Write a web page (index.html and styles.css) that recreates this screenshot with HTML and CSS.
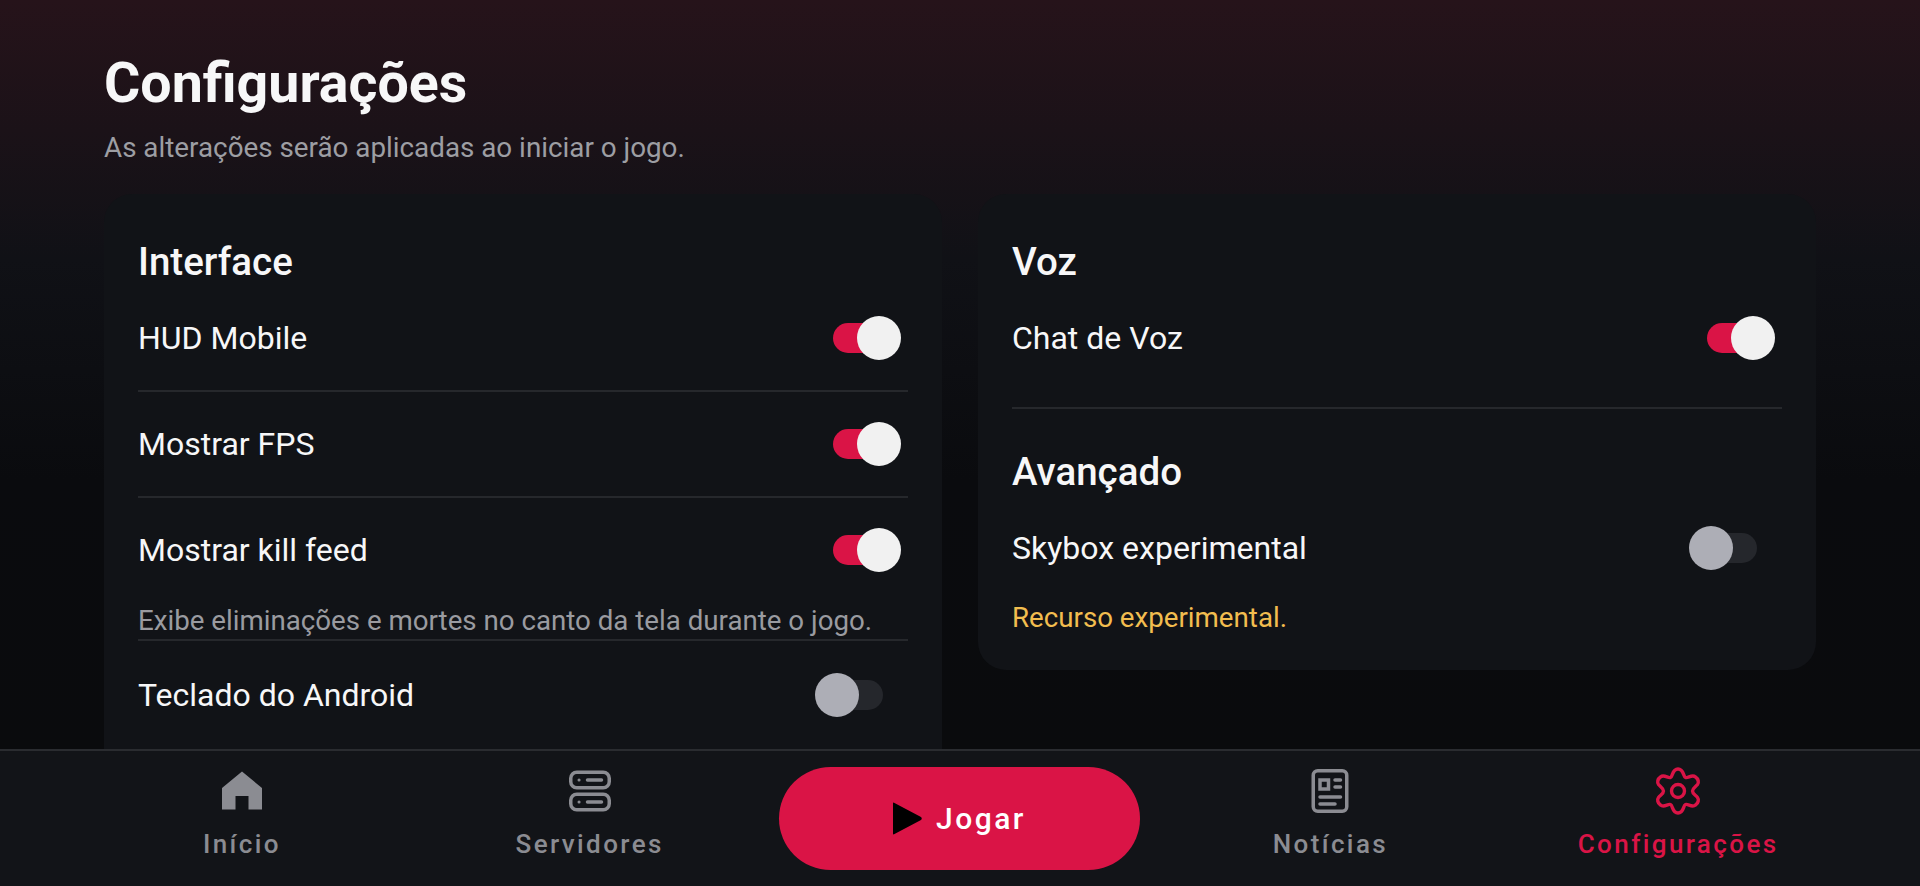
FILE: index.html
```html
<!DOCTYPE html>
<html lang="pt-BR">
<head>
    <title>Configurações</title>
    <meta charset="UTF-8">
    <link rel="stylesheet" href="styles.css">
</head>
<body>
    <main class="content">
        <header class="page-head">
            <h1>Configurações</h1>
            <p>As alterações serão aplicadas ao iniciar o jogo.</p>
        </header>

        <div class="columns">
            <section class="card">
                <h2>Interface</h2>
                <div class="setting">
                    <div class="setting-main"><span>HUD Mobile</span><span class="toggle on"></span></div>
                </div>
                <div class="setting">
                    <div class="setting-main"><span>Mostrar FPS</span><span class="toggle on"></span></div>
                </div>
                <div class="setting">
                    <div class="setting-main"><span>Mostrar kill feed</span><span class="toggle on"></span></div>
                    <p class="hint">Exibe eliminações e mortes no canto da tela durante o jogo.</p>
                </div>
                <div class="setting setting-last setting-end">
                    <div class="setting-main"><span>Teclado do Android</span><span class="toggle"></span></div>
                </div>
            </section>

            <section class="card card-short">
                <h2>Voz</h2>
                <div class="setting setting-spaced">
                    <div class="setting-main"><span>Chat de Voz</span><span class="toggle on"></span></div>
                </div>
                <h2 class="section-next">Avançado</h2>
                <div class="setting setting-last">
                    <div class="setting-main"><span>Skybox experimental</span><span class="toggle"></span></div>
                    <p class="hint warn">Recurso experimental.</p>
                </div>
            </section>
        </div>
    </main>

    <nav class="tabbar">
        <a class="tab">
            <svg class="icon" viewBox="-4 -4.5 48 48"><path fill="currentColor" d="M20 0 L40 16.500 V38 H26.500 V24.500 H13.500 V38 H0 V16.500 Z"/></svg>
            <span>Início</span>
        </a>
        <a class="tab">
            <svg class="icon" viewBox="-3 -3.500 48 48" fill="none" stroke="currentColor">
                <rect x="1.750" y="1.750" width="38.500" height="15.500" rx="6" stroke-width="3.500"/>
                <rect x="1.750" y="23.750" width="38.500" height="15.500" rx="6" stroke-width="3.500"/>
                <path stroke-width="3.500" stroke-linecap="round" d="M18.500 9.500h14M18.500 31.500h14"/>
                <path stroke-width="3" stroke-linecap="round" d="M10 9.500h.1M10 31.500h.1"/>
            </svg>
            <span>Servidores</span>
        </a>
        <button class="play">
            <svg class="play-icon" viewBox="0 0 30 33"><path fill="#000" d="M1 1.500 Q1 0 2.500 1 L29 15 Q30.500 16.500 29 18 L2.500 32 Q1 33 1 31.500 Z"/></svg>
            <span>Jogar</span>
        </button>
        <a class="tab">
            <svg class="icon" viewBox="-5.500 -2 48 48" fill="none" stroke="currentColor">
                <rect x="1.750" y="1.750" width="33.500" height="40.500" rx="4.500" stroke-width="3.500"/>
                <rect x="8.500" y="11" width="8.500" height="9" stroke-width="3.500"/>
                <path stroke-width="3.500" stroke-linecap="round" d="M23.500 11h5.500M23.500 18h5.500M8.500 28h20.500M8.500 35h15"/>
            </svg>
            <span>Notícias</span>
        </a>
        <a class="tab active">
            <svg class="icon" viewBox="-2 0 48 48" fill="none" stroke="currentColor" stroke-width="3.400">
                <path d="M14.500 10.500 C17 9.500 16 2 22 2 C28 2 27 9.500 29.500 10.500 C32 11.500 36 7 39.500 10 C42.500 12 43 15.500 41.500 17.500 C39.500 20 36.500 21 36.500 24 C36.500 27 39.500 28 41.500 30.500 C43 32.500 42.500 36 39.500 38 C36 41 32 36.500 29.500 37.500 C27 38.500 28 46 22 46 C16 46 17 38.500 14.500 37.500 C12 36.500 8 41 4.500 38 C1.500 36 1 32.500 2.500 30.500 C4.500 28 7.500 27 7.500 24 C7.500 21 4.500 20 2.500 17.500 C1 15.500 1.500 12 4.500 10 C8 7 12 11.500 14.500 10.500 Z"/>
                <circle cx="22" cy="24" r="6.500"/>
            </svg>
            <span>Configurações</span>
        </a>
    </nav>
</body>
</html>
```

FILE: styles.css
```css
* {
    box-sizing: border-box;
}

html, body {
    height: 100%;
    margin: 0;
}

body {
    display: flex;
    flex-direction: column;
    overflow: hidden;
    font-family: Roboto, "Liberation Sans", sans-serif;
    color: #f7f7f8;
    background: linear-gradient(180deg, #26131a 0px, #1b1218 130px, #101116 260px, #0a0b0e 480px, #0a0b0d 749px);
}

.content {
    flex: 1;
    min-height: 0;
    overflow: hidden;
    padding: 53px 104px 0;
}

.page-head h1 {
    margin: 0;
    font-size: 55.5px;
    line-height: 62px;
    font-weight: 700;
}

.page-head p {
    margin: 16px 0 0;
    font-size: 27.8px;
    line-height: 34px;
    color: #9d9ea3;
}

.columns {
    display: grid;
    grid-template-columns: 1fr 1fr;
    gap: 36px;
    align-items: start;
    margin-top: 29px;
}

.card {
    padding: 47px 34px 40px;
    border-radius: 28px;
    background: #111317;
}

.card h2 {
    margin: 0 0 3px;
    font-size: 38.5px;
    line-height: 42px;
    font-weight: 500;
}

.card .section-next {
    margin-top: 42px;
}

.setting {
    border-bottom: 2px solid #26282c;
}

.setting-main {
    display: flex;
    align-items: center;
    justify-content: space-between;
    height: 104px;
    font-size: 32px;
}

.setting-spaced {
    padding-bottom: 17px;
}

.setting-last {
    border-bottom: 0;
}

.setting-end {
    margin-top: 2px;
}

.card-short {
    padding-bottom: 34px;
}

.hint {
    margin: 1px 0 0;
    font-size: 27.7px;
    line-height: 36px;
    color: #9a9ba0;
}

.warn {
    margin-top: 0;
    color: #f2bd4f;
}

.toggle {
    position: relative;
    width: 50px;
    height: 30px;
    margin-right: 25px;
    border-radius: 15px;
    background: #25272c;
}

.toggle::after {
    content: "";
    position: absolute;
    top: -7px;
    left: -18px;
    width: 44px;
    height: 44px;
    border-radius: 50%;
    background: #adaeb6;
}

.toggle.on {
    background: #da1446;
}

.toggle.on::after {
    left: 24px;
    background: #f1f1f1;
}

.tabbar {
    display: flex;
    align-items: center;
    flex: none;
    height: 137px;
    padding: 0 68px;
    border-top: 2px solid #2a2c30;
    background: #121418;
}

.tab {
    flex: 1;
    display: flex;
    flex-direction: column;
    align-items: center;
    gap: 13px;
    padding-bottom: 10px;
    font-size: 26px;
    line-height: 32px;
    font-weight: 500;
    letter-spacing: 2.4px;
    color: #8b8c92;
}

.tab.active {
    color: #da1446;
}

.icon {
    height: 48px;
    width: 48px;
}

.play {
    display: flex;
    align-items: center;
    justify-content: center;
    gap: 14px;
    width: 361px;
    height: 103px;
    margin: 0 17px 0 15px;
    border: 0;
    border-radius: 52px;
    background: #da1446;
    color: #fff;
    font-family: inherit;
    font-size: 30px;
    font-weight: 500;
    letter-spacing: 2.5px;
}

.play-icon {
    width: 30px;
    height: 33px;
}
```
